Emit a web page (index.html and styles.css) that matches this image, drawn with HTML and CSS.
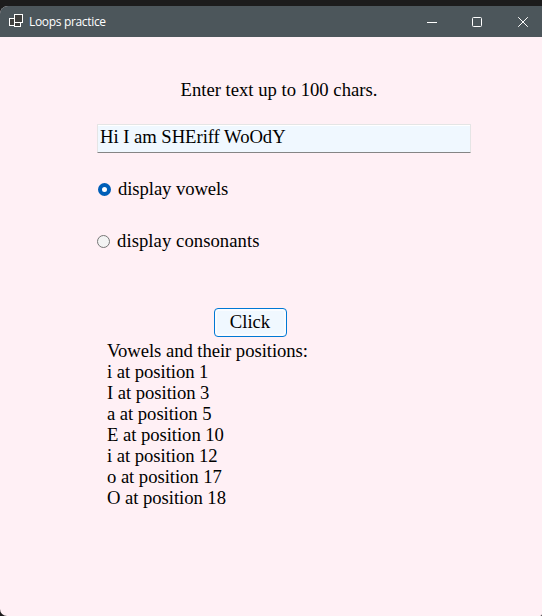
FILE: index.html
```
<!DOCTYPE html>
<html lang="en">
<head>
<meta charset="utf-8">
<title>Loops practice</title>
<link rel="stylesheet" href="styles.css">
</head>
<body>
<div class="window">
  <header class="titlebar">
    <svg class="app-icon" width="16" height="16" viewBox="0 0 16 16" fill="#3e3e3c" stroke="#fff" shape-rendering="crispEdges">
      <rect x="1.5" y="5.5" width="5" height="7"/>
      <rect x="6.5" y="9.5" width="6" height="4"/>
      <rect x="6.5" y="1.5" width="8" height="8"/>
    </svg>
    <span class="title">Loops practice</span>
    <div class="controls">
      <svg width="10" height="10" viewBox="0 0 10 10"><path d="M0 5.5H10" stroke="#fff"/></svg>
      <svg width="10" height="10" viewBox="0 0 10 10"><rect x=".5" y=".5" width="9" height="9" rx="1" fill="none" stroke="#fff"/></svg>
      <svg class="close" width="10" height="10" viewBox="0 0 10 10"><path d="M.2 .2L9.8 9.8M9.8 .2L.2 9.8" stroke="#fff"/></svg>
    </div>
  </header>
  <main class="form">
    <label class="prompt" for="text">Enter text up to 100 chars.</label>
    <input class="field" id="text" type="text" maxlength="100" value="Hi I am SHEriff WoOdY">
    <label class="option"><input class="radio" type="radio" name="mode" checked>display vowels</label>
    <label class="option option-second"><input class="radio" type="radio" name="mode">display consonants</label>
    <button class="button" type="button">Click</button>
    <div class="output">
      <div>Vowels and their positions:</div>
      <div>i at position 1</div>
      <div>I at position 3</div>
      <div>a at position 5</div>
      <div>E at position 10</div>
      <div>i at position 12</div>
      <div>o at position 17</div>
      <div>O at position 18</div>
    </div>
  </main>
</div>
</body>
</html>
```
FILE: styles.css
```
* {
  box-sizing: border-box;
}

body {
  margin: 0;
  height: 616px;
  padding-top: 6px;
  overflow: hidden;
  background: #1c1c1c;
  color: #000;
  font: 18.67px/21px "Liberation Serif", serif;
}

.window {
  height: 610px;
  overflow: hidden;
  border-radius: 8px 0 2px 7px;
  background: #fff0f5;
}

.titlebar {
  display: flex;
  align-items: center;
  height: 31px;
  padding: 0 14px 0 8px;
  background: #4c565b;
}

.app-icon {
  margin-top: -2px;
}

.title {
  margin-left: 5px;
  color: #fff;
  font: 12px/16px "Open Sans", sans-serif;
  letter-spacing: -0.33px;
}

.controls {
  display: flex;
  gap: 35px;
  margin-left: auto;
}

.close {
  margin-left: 1px;
}

.form {
  display: flex;
  flex-direction: column;
  align-items: flex-start;
  padding: 42px 0 0 97px;
}

.prompt {
  margin-left: 83.5px;
}

.field {
  width: 374px;
  height: 29px;
  margin: 24px 0 25px;
  padding: 0 2px 3px;
  border: 1px solid #e5e5e5;
  border-bottom-color: #858585;
  border-radius: 1px;
  outline: 0;
  background: #f0f8ff;
  box-shadow: inset 0 1px #fff;
  color: #000;
  font: inherit;
  letter-spacing: -0.04px;
}

.option {
  display: flex;
  align-items: center;
  height: 21px;
  margin-left: 1px;
  letter-spacing: -0.08px;
}

.option-second {
  margin: 31px 0 57px;
  letter-spacing: 0.06px;
}

.radio {
  appearance: none;
  width: 13px;
  height: 13px;
  margin: 1px 7px 0 0;
  border: 1px solid #767676;
  border-radius: 50%;
  background: #f3f3f3;
}

.radio:checked {
  border: 4px solid #005fb8;
  background: #fff;
}

.button {
  width: 73px;
  height: 29px;
  margin-left: 117px;
  padding: 0 1px 3px 0;
  border: 1px solid #0078d4;
  border-radius: 4px;
  background: #f0f8ff;
  box-shadow: inset 0 0 0 2px #fafcff;
  color: #000;
  font: inherit;
}

.output {
  margin: 3px 0 0 10px;
  letter-spacing: -0.05px;
}
```
